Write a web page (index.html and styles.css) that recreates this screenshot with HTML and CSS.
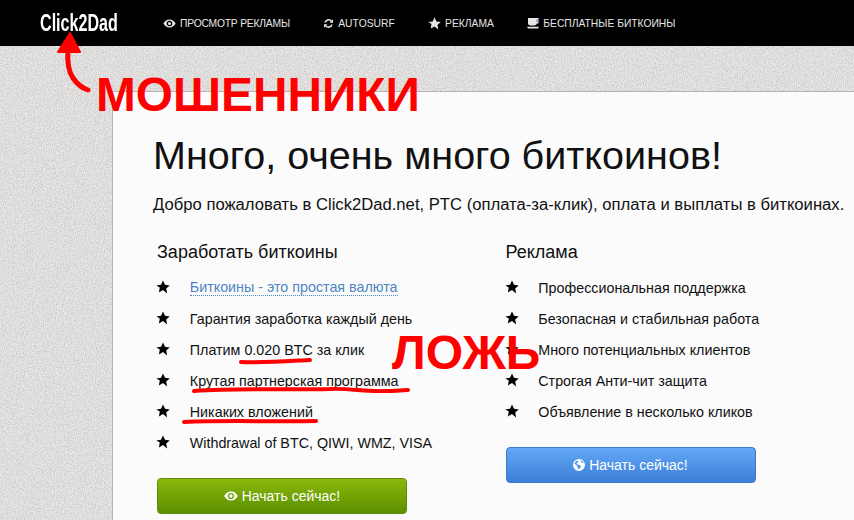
FILE: index.html
```html
<!DOCTYPE html>
<html lang="ru">
<head>
    <meta charset="UTF-8">
    <meta name="viewport" content="width=device-width, initial-scale=1.0">
    <title>Click2Dad</title>
    <link rel="stylesheet" href="styles.css">
</head>
<body>

<svg class="defs" width="0" height="0">
    <symbol id="star" viewBox="0 0 14 14">
        <path d="M7 .4l2 4.400 4.700.6-3.500 3.200.9 4.800L7 10.100l-4.100 2.300.9-4.800L.3 5.400 5 4.800z"/>
    </symbol>
    <symbol id="eye" viewBox="0 0 14 10">
        <path fill-rule="evenodd" d="M7 .5C3.900.5 1.400 2.600.2 5c1.200 2.400 3.700 4.500 6.800 4.500s5.600-2.100 6.800-4.500C12.600 2.600 10.100.5 7 .5zM7 1.900a3.100 3.100 0 1 1 0 6.200 3.100 3.100 0 0 1 0-6.200zM7 3.300a1.700 1.700 0 1 0 0 3.400 1.700 1.700 0 0 0 0-3.400z"/>
    </symbol>
    <filter id="linen" x="0" y="0" width="100%" height="100%">
        <feTurbulence type="fractalNoise" baseFrequency="0.9 0.7" numOctaves="2" seed="4"/>
        <feColorMatrix type="matrix" values="0 0 0 0 0  0 0 0 0 0  0 0 0 0 0  0.300 0 0 0 -0.100"/>
    </filter>
</svg>

<svg class="texture" width="854" height="520"><rect width="854" height="520" filter="url(#linen)"/></svg>

<nav class="topbar">
    <a class="logo"><span class="logo-text">Click2Dad</span></a>
    <a class="nav-item nav-item-tight">
        <svg class="nav-icon" width="13" height="9"><use href="#eye"/></svg>
        Просмотр рекламы
    </a>
    <a class="nav-item">
        <svg class="nav-icon" width="11" height="11" viewBox="0 0 11 11">
            <path d="M1.300 4.600A4.300 4.300 0 0 1 8.700 2.500L10 1.200v3.500H6.500l1.200-1.200A2.900 2.900 0 0 0 2.800 4.600zM9.700 6.400A4.300 4.300 0 0 1 2.300 8.500L1 9.800V6.300h3.500L3.300 7.500a2.900 2.900 0 0 0 4.900-1.100z"/>
        </svg>
        Autosurf
    </a>
    <a class="nav-item">
        <svg class="nav-icon" width="13" height="13"><use href="#star"/></svg>
        Реклама
    </a>
    <a class="nav-item">
        <svg class="nav-icon" width="12" height="11" viewBox="0 0 12 11">
            <path fill-rule="evenodd" d="M1 0h10.500v5.500H9.800C9.500 6.700 8.500 7.500 7 7.500H3.500C2 7.500 1 6.500 1 5zM9.800 1.300v2.900h.5V1.300zM0 8.800h12l-1 1.700H1z"/>
        </svg>
        Бесплатные биткоины
    </a>
</nav>

<main class="page">
    <section class="panel">
        <h1>Много, очень много биткоинов!</h1>
        <p class="intro">Добро пожаловать в Click2Dad.net, PTC (оплата-за-клик), оплата и выплаты в биткоинах.</p>

        <div class="columns">
            <div class="column">
                <h3>Заработать биткоины</h3>
                <ul class="stars">
                    <li><svg class="star" width="14" height="14"><use href="#star"/></svg><a class="dotted">Биткоины - это простая валюта</a></li>
                    <li><svg class="star" width="14" height="14"><use href="#star"/></svg>Гарантия заработка каждый день</li>
                    <li><svg class="star" width="14" height="14"><use href="#star"/></svg>Платим 0.020 BTC за клик</li>
                    <li><svg class="star" width="14" height="14"><use href="#star"/></svg>Крутая партнерская программа</li>
                    <li><svg class="star" width="14" height="14"><use href="#star"/></svg>Никаких вложений</li>
                    <li><svg class="star" width="14" height="14"><use href="#star"/></svg>Withdrawal of BTC, QIWI, WMZ, VISA</li>
                </ul>
                <a class="button button-green">
                    <svg class="btn-icon" width="14" height="10"><use href="#eye"/></svg>
                    Начать сейчас!
                </a>
            </div>
            <div class="column">
                <h3>Реклама</h3>
                <ul class="stars">
                    <li><svg class="star" width="14" height="14"><use href="#star"/></svg>Профессиональная поддержка</li>
                    <li><svg class="star" width="14" height="14"><use href="#star"/></svg>Безопасная и стабильная работа</li>
                    <li><svg class="star" width="14" height="14"><use href="#star"/></svg>Много потенциальных клиентов</li>
                    <li><svg class="star" width="14" height="14"><use href="#star"/></svg>Строгая Анти-чит защита</li>
                    <li><svg class="star" width="14" height="14"><use href="#star"/></svg>Объявление в несколько кликов</li>
                </ul>
                <a class="button button-blue">
                    <svg class="btn-icon" width="12" height="12" viewBox="0 0 12 12">
                        <path fill-rule="evenodd" d="M6 0a6 6 0 1 1 0 12A6 6 0 0 1 6 0zM4.500 1.500C3 2 1.800 3.300 1.500 5c.8 0 1.200.6 1.800 1 .7.300.6 1 .9 1.700.3.600.9.700 1 1.500 0 .4.200 1 .5 1.300.6-.3 1-1 1.300-1.500.4-.6 1-1 .9-1.700-.1-.8-1-1-1.700-1.400C5 5.500 4 5.800 3.700 4.800 3.500 4 4.500 3.800 5 3.300c.3-.5.200-1.200-.5-1.800zM8 1.600c-.4.500-.3 1 .2 1.300.7.300 1 1 1.600 1.100.4 0 .7 0 .8-.2C10.200 2.900 9.200 2 8 1.600z"/>
                    </svg>
                    Начать сейчас!
                </a>
            </div>
        </div>
    </section>
</main>

<!-- red marker scribbled on top of the screenshot -->
<svg class="scribble" width="854" height="520" viewBox="0 0 854 520">
    <path class="mark-fill" d="M70 33L58 52H80z"/>
    <path class="mark mark-thick" d="M68 50C67 62 69 72 73 78C77 84 82 88 88 90"/>
    <path class="mark" d="M241 362C262 363 290 361 310 360"/>
    <path class="mark" d="M194 391C240 388 280 390 330 389C350 388 365 392 385 391C395 391 402 390 408 390"/>
    <path class="mark" d="M184 422C225 420 275 422 316 421"/>
</svg>
<div class="shout shout-fraud">МОШЕННИКИ</div>
<div class="shout shout-lie">ЛОЖЬ</div>

</body>
</html>
```

FILE: styles.css
```css
html, body {
    margin: 0;
    padding: 0;
    height: 520px;
    overflow: hidden;
}

body {
    position: relative;
    font-family: 'Liberation Sans', Arial, sans-serif;
    color: #111;
    background-color: #ebe9e7;
}

.defs {
    position: absolute;
}

.texture {
    position: absolute;
    top: 0;
    left: 0;
}

.topbar {
    position: relative;
    display: flex;
    align-items: center;
    height: 46px;
    padding-left: 40px;
    background-color: #000;
    color: #e6e6e6;
}

.logo {
    width: 78px;
    margin-right: 45px;
}

.logo-text {
    display: inline-block;
    font-weight: bold;
    font-size: 23px;
    color: #fff;
    white-space: nowrap;
    transform: scaleX(0.7);
    transform-origin: left center;
}

.nav-item {
    display: flex;
    align-items: center;
    margin-right: 33.400px;
    font-size: 10.300px;
    text-transform: uppercase;
    white-space: nowrap;
}

.nav-item-tight {
    letter-spacing: -0.2px;
}

.nav-icon {
    margin-right: 4px;
    fill: #e6e6e6;
}

.page {
    position: relative;
    padding: 45px 0 0 112px;
}

.panel {
    height: 429px;
    padding: 38px 0 0 40px;
    box-sizing: border-box;
    background-color: #fbfbfb;
    border-top: 1px solid #b5b3b0;
    border-left: 1px solid #b5b3b0;
}

h1 {
    margin: 0;
    font-size: 39.500px;
    font-weight: normal;
    line-height: 50px;
    white-space: nowrap;
}

.intro {
    margin: 15px 0 0;
    font-size: 16.650px;
    line-height: 20px;
    white-space: nowrap;
}

.columns {
    display: flex;
    margin: 26px 0 0 4px;
}

.column {
    width: 349px;
}

h3 {
    margin: 0;
    font-size: 18px;
    font-weight: normal;
    line-height: 22px;
}

.stars {
    list-style: none;
    margin: 9px 0 0;
    padding: 0;
}

.stars li {
    display: flex;
    align-items: center;
    height: 31px;
    font-size: 14.300px;
    white-space: nowrap;
}

.star {
    flex: none;
    margin: -2px 19.800px 0 -1px;
    fill: #000;
}

.dotted {
    color: #4d86c4;
    border-bottom: 1px dotted #4d86c4;
}

.button {
    display: flex;
    align-items: center;
    justify-content: center;
    width: 250px;
    height: 36px;
    margin-top: 20px;
    box-sizing: border-box;
    border-radius: 4px;
    font-size: 14px;
    color: #fff;
}

.button-green {
    background: linear-gradient(#8ab80a, #5b8f00);
    border: 1px solid #5f8a0a;
}

.button-blue {
    background: linear-gradient(#62a8f5, #3c7fd8);
    border: 1px solid #3f78c6;
}

.btn-icon {
    margin-right: 4px;
    fill: #fff;
}

.scribble {
    position: absolute;
    top: 0;
    left: 0;
}

.mark {
    fill: none;
    stroke: #f00;
    stroke-width: 4;
    stroke-linecap: round;
}

.mark-thick {
    stroke-width: 5;
}

.mark-fill {
    fill: #f00;
    stroke: #f00;
    stroke-linejoin: round;
    stroke-width: 2;
}

.shout {
    position: absolute;
    color: #f00;
    font-weight: bold;
    white-space: nowrap;
}

.shout-fraud {
    top: 67px;
    left: 96px;
    font-size: 47.800px;
    line-height: 55px;
}

.shout-lie {
    top: 325px;
    left: 392px;
    font-size: 48px;
    line-height: 55px;
}
```
